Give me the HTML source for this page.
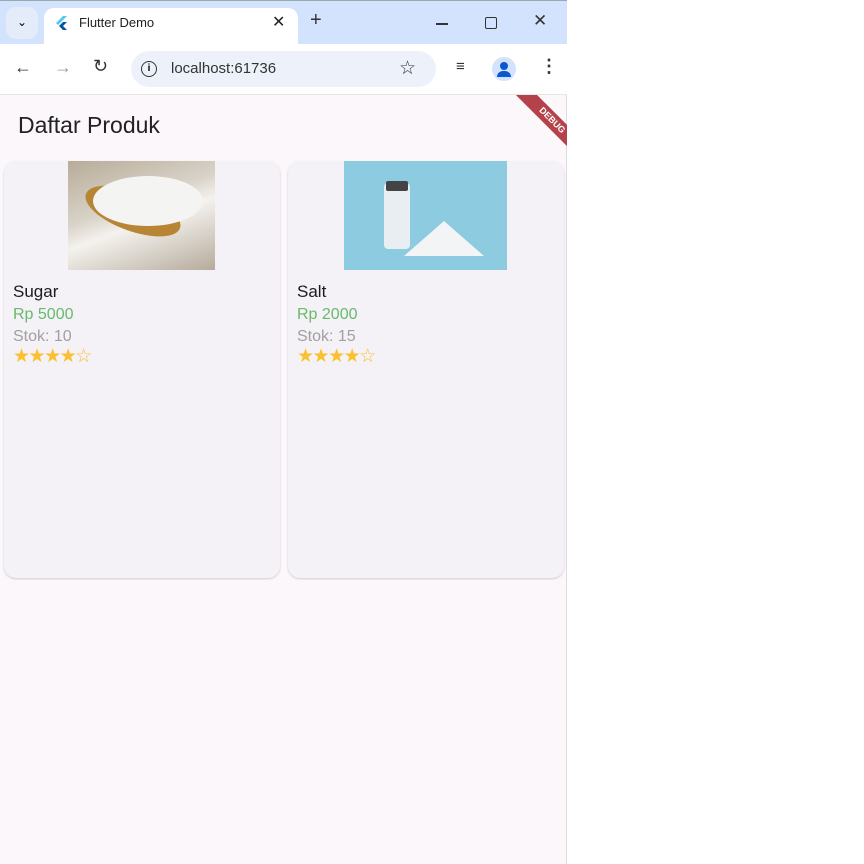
<!DOCTYPE html>
<html><head><style>
*{margin:0;padding:0;box-sizing:border-box}
body{width:864px;height:864px;background:#fff;font-family:"Liberation Sans",sans-serif;position:relative;overflow:hidden}
.win{position:absolute;left:0;top:0;width:567px;height:864px;background:#fcf7fb;border-right:1px solid #ddd}
.tabs{position:absolute;left:0;top:0;width:567px;height:44px;background:#d3e3fd;border-top:1px solid #9aa}
.tab{position:absolute;left:44px;top:7px;width:254px;height:38px;background:#fff;border-radius:10px 10px 0 0}
.bar{position:absolute;left:0;top:44px;width:567px;height:51px;background:#fff;border-bottom:1px solid #e6e6e6}
.omni{position:absolute;left:131px;top:7px;width:305px;height:36px;background:#edf2fa;border-radius:18px}
.card{position:absolute;top:161px;width:276px;height:417px;background:#f4f1f7;border-radius:12px;box-shadow:0 1px 2px rgba(0,0,0,.18)}
.t{position:absolute;font-size:16px}
.img{position:absolute;top:0}
.stars{position:absolute;top:184px;font-size:19px;color:#fbc02d;letter-spacing:-1.5px}
</style></head><body>
<div class="win">
<div class="tabs">
 <div style="position:absolute;left:6px;top:6px;width:32px;height:32px;background:#e4ecf9;border-radius:10px;text-align:center;line-height:30px;font-size:12px">⌄</div>
 <div class="tab">
  <svg style="position:absolute;left:12px;top:8px" width="12" height="14" viewBox="0 0 12 14"><path d="M7 0L0 7l2 2 9-9z" fill="#54c5f8"/><path d="M7 6L3 10l4 4h4L7 10l4-4z" fill="#01579b"/></svg>
  <div style="position:absolute;left:35px;top:7px;font-size:13px;color:#222">Flutter Demo</div>
  <div style="position:absolute;left:228px;top:4px;font-size:16px;color:#222">✕</div>
 </div>
 <div style="position:absolute;left:310px;top:8px;font-size:20px;color:#333">+</div>
 <div style="position:absolute;left:436px;top:22px;width:12px;height:1.5px;background:#333"></div>
 <div style="position:absolute;left:485px;top:16px;width:12px;height:12px;border:1.5px solid #333;border-radius:2px"></div>
 <div style="position:absolute;left:533px;top:10px;font-size:17px;color:#333">✕</div>
</div>
<div class="bar">
 <div style="position:absolute;left:14px;top:13px;font-size:18px;color:#333">←</div>
 <div style="position:absolute;left:54px;top:13px;font-size:18px;color:#999">→</div>
 <div style="position:absolute;left:93px;top:12px;font-size:18px;color:#333">↻</div>
 <div class="omni">
  <div style="position:absolute;left:10px;top:10px;width:16px;height:16px;border:1.8px solid #333;border-radius:50%;font-size:10px;text-align:center;line-height:13px;font-weight:bold">i</div>
  <div style="position:absolute;left:40px;top:9px;font-size:15px;color:#333">localhost:61736</div>
  <div style="position:absolute;left:268px;top:6px;font-size:19px;color:#333">☆</div>
 </div>
 <div style="position:absolute;left:456px;top:14px;font-size:15px;color:#333">≡</div>
 <div style="position:absolute;left:492px;top:13px;width:24px;height:24px;border-radius:50%;background:#d3e3fd"><div style="position:absolute;left:8px;top:5px;width:8px;height:8px;border-radius:50%;background:#0b57d0"></div><div style="position:absolute;left:5px;top:14px;width:14px;height:6px;border-radius:6px 6px 0 0;background:#0b57d0"></div></div>
 <div style="position:absolute;left:540px;top:12px;font-size:18px;color:#333;font-weight:bold">⋮</div>
</div>
<div style="position:absolute;left:18px;top:112px;font-size:23px;color:#222">Daftar Produk</div>
<div style="position:absolute;left:500px;top:95px;width:67px;height:67px;overflow:hidden"><div style="position:absolute;left:2px;top:18px;width:100px;height:15px;background:#b3424a;transform:rotate(45deg);color:#fff;font-size:9px;font-weight:bold;text-align:center;line-height:15px">DEBUG</div></div>
<div class="card" style="left:4px">
 <div class="img" style="left:64px;width:147px;height:109px;background:linear-gradient(160deg,#b8ac98 0%,#d8d2c8 40%,#f4f2ee 55%,#b6ab9c 100%)">
  <div style="position:absolute;left:15px;top:30px;width:100px;height:40px;border-radius:50%;background:#b88535;transform:rotate(20deg)"></div>
  <div style="position:absolute;left:25px;top:15px;width:110px;height:50px;border-radius:50%;background:#f4f4f2"></div></div>
 <div class="t" style="left:9px;top:121px;color:#1c1b1f;font-size:17px">Sugar</div>
 <div class="t" style="left:9px;top:145px;color:#66bb6a">Rp 5000</div>
 <div class="t" style="left:9px;top:167px;color:#a0a0a0">Stok: 10</div>
 <div class="stars" style="left:9px">★★★★☆</div>
</div>
<div class="card" style="left:288px">
 <div class="img" style="left:56px;width:163px;height:109px;background:#8ccbe0">
  <div style="position:absolute;left:40px;top:22px;width:26px;height:66px;border-radius:4px;background:#e8eef2"></div>
  <div style="position:absolute;left:42px;top:20px;width:22px;height:10px;background:#444;border-radius:2px"></div>
  <div style="position:absolute;left:60px;top:60px;width:80px;height:35px;background:#f2f4f5;clip-path:polygon(50% 0,100% 100%,0 100%)"></div></div>
 <div class="t" style="left:9px;top:121px;color:#1c1b1f;font-size:17px">Salt</div>
 <div class="t" style="left:9px;top:145px;color:#66bb6a">Rp 2000</div>
 <div class="t" style="left:9px;top:167px;color:#a0a0a0">Stok: 15</div>
 <div class="stars" style="left:9px">★★★★☆</div>
</div>
</div>
</body></html>
